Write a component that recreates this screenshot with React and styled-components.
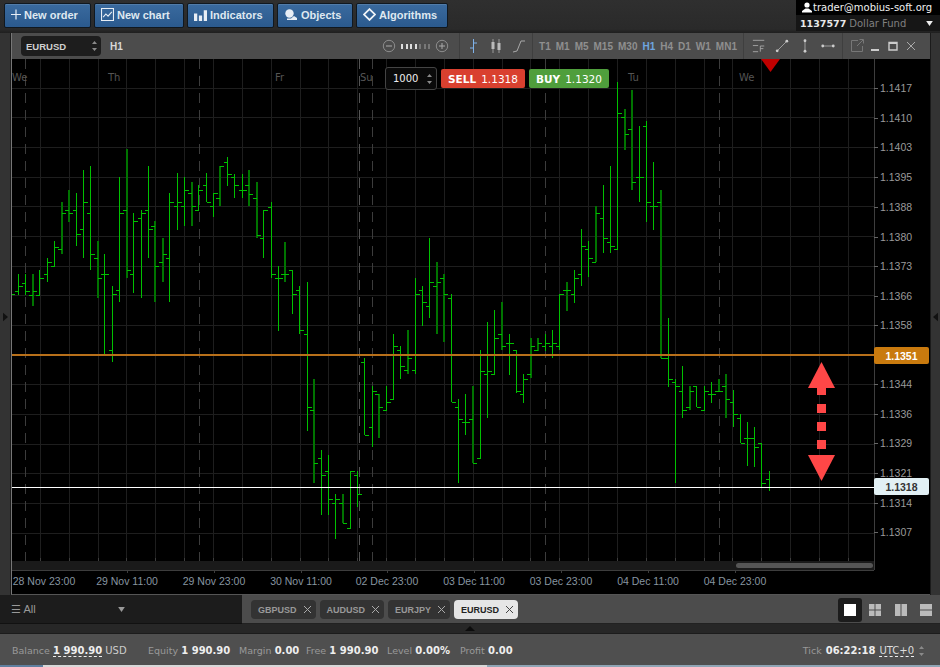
import styled, { createGlobalStyle } from 'styled-components'

const GlobalStyle = createGlobalStyle`
    html, body { margin: 0; padding: 0; background: #222; }
    * { box-sizing: border-box; }
    body { font-family: "DejaVu Sans", "Liberation Sans", sans-serif; }
`

// high, low, open (left tick), close (right tick), dim
const BARS = [
    [274,295,291,286],[274,295,283,291],[274,306,295,291,1],[270,295,295,278],[258,282,274,262],[241,267,266,247],
    [202,254,249,213,1],[190,222,210,213,1],[193,246,210,234],[170,258,229,202],[166,270,213,254],[241,298,258,278,1],
    [254,355,274,274],[286,362,350,294],[177,302,290,213],[149,278,210,270,1],[213,293,274,221],[210,298,218,213],
    [166,258,210,229],[221,302,226,266,1],[238,282,262,254,1],[193,302,258,202],[173,230,206,202],[177,226,206,190],
    [182,226,193,206,1],[185,210,210,190],[173,202,185,202],[193,217,206,193],[166,206,198,166,1],[157,186,162,174],
    [174,198,177,185],[174,198,190,190],[170,206,185,194,1],[182,238,198,235,1],[210,258,238,210],[202,278,207,274],
    [266,331,278,278],[242,282,274,274,1],[270,314,270,294],[286,334,290,330],[282,431,334,407],[379,483,410,463,1],
    [450,515,458,475],[455,515,471,499],[494,539,503,499],[494,523,503,523,1],[471,528,528,471],[471,507,475,494],
    [358,435,362,435],[386,447,427,391],[394,438,394,407,1],[386,411,410,402],[334,399,399,346],[346,379,350,366],
    [330,374,370,358,1],[278,374,370,294],[286,326,290,302],[238,318,306,282],[262,334,286,282,1],[274,342,278,294,1],
    [294,402,298,402],[399,483,407,419],[394,435,422,422],[386,463,419,463,1],[350,458,458,371],[322,418,374,371],
    [310,374,374,338],[302,350,334,346,1],[334,375,343,343],[350,393,350,391],[374,403,394,379],[338,378,374,346,1],
    [338,351,350,343,1],[334,351,346,343],[330,358,346,343],[294,350,346,294],[282,311,290,290,1],[270,303,294,278],
    [229,286,274,246],[241,277,249,258],[206,262,262,213,1],[185,253,218,238],[166,253,242,246],[82,250,249,113],
    [109,150,117,134,1],[90,190,129,182,1],[126,202,177,177],[121,222,126,202],[162,230,206,206],[190,358,202,358,1],
    [318,387,358,379],[379,483,382,386],[366,418,391,410],[386,410,407,391,1],[386,407,386,407],[386,411,410,391],
    [382,403,394,394],[379,391,391,391,1],[374,418,386,399,1],[390,427,402,414],[414,443,418,443],[422,466,438,438],
    [427,467,438,447],[443,487,443,483],[471,491,479,487],
]

const PRICES = [
    ['1.1417', 88], ['1.1410', 118], ['1.1403', 147], ['1.1395', 177], ['1.1388', 207], ['1.1380', 237],
    ['1.1373', 266], ['1.1366', 296], ['1.1358', 325], ['1.1344', 384], ['1.1336', 414], ['1.1329', 443],
    ['1.1321', 473], ['1.1314', 503], ['1.1307', 532],
]

const TIMES = [
    ['28 Nov 23:00', 44], ['29 Nov 11:00', 127], ['29 Nov 23:00', 214], ['30 Nov 11:00', 301], ['02 Dec 23:00', 387],
    ['03 Dec 11:00', 474], ['03 Dec 23:00', 561], ['04 Dec 11:00', 648], ['04 Dec 23:00', 735],
]

const DAYS = [['We', 12], ['Th', 108], ['Fr', 275], ['Su', 360], ['Tu', 628], ['We', 739]]
const FRAMES = ['T1', 'M1', 'M5', 'M15', 'M30', 'H1', 'H4', 'D1', 'W1', 'MN1']
const TABS = ['GBPUSD', 'AUDUSD', 'EURJPY', 'EURUSD']

const px = v => Math.floor(v) + 0.5

function PriceChart() {
    const vGrid = []
    for (let x = 40.3; x < 874; x += 28.86) vGrid.push(px(x))
    const hGrid = []
    for (let y = 88; y < 562; y += 29.67) hGrid.push(px(y))

    return (
        <PlotSvg viewBox="12 59 914 535">
            <g shapeRendering="crispEdges">
                {vGrid.map(x => <line key={x} x1={x} x2={x} y1={59} y2={570} stroke="#1e1e1e" />)}
                {hGrid.map(y => <line key={y} x1={12} x2={874} y1={y} y2={y} stroke="#1e1e1e" />)}
                {[25, 199, 359, 372, 545, 719].map(x => (
                    <line key={x} x1={x + 0.5} x2={x + 0.5} y1={59} y2={561} stroke={x === 359 ? '#555' : '#3c3c3c'} strokeDasharray="10 7" />
                ))}
                <line x1={12} x2={15} y1={294.5} y2={294.5} stroke="#00c000" />
                {BARS.map((b, i) => {
                    const raw = 18.3 + 7.22 * i
                    const x = b[4] ? Math.round(raw) : px(raw)
                    return (
                        <g key={i} stroke="#00c000">
                            <line x1={x} x2={x} y1={b[0]} y2={b[1]} stroke={b[4] ? '#007400' : '#00c000'} strokeWidth={b[4] ? 2 : 1} />
                            <line x1={x - 4} x2={x} y1={px(b[2])} y2={px(b[2])} />
                            <line x1={x} x2={x + 4} y1={px(b[3])} y2={px(b[3])} />
                        </g>
                    )
                })}
                <line x1={12} x2={874} y1={355} y2={355} stroke="#b8701a" strokeWidth="2" />
                <line x1={12} x2={874} y1={487.5} y2={487.5} stroke="#fff" />

                <rect x={12} y={561} width={862} height={9} fill="#1a1a1a" />
                <line x1={874.5} x2={874.5} y1={59} y2={570} stroke="#3d3d3d" />
                <line x1={12} x2={874} y1={570.5} y2={570.5} stroke="#3d3d3d" />
                {vGrid.map(x => <line key={x} x1={x} x2={x} y1={558} y2={561} stroke="#3d3d3d" />)}
                {TIMES.slice(1).map(([, x]) => <line key={x} x1={x + 0.5} x2={x + 0.5} y1={570} y2={573} stroke="#3d3d3d" />)}
                {PRICES.map(([, y]) => <line key={y} x1={874} x2={878} y1={y + 0.5} y2={y + 0.5} stroke="#666" />)}
            </g>

            {DAYS.map(([d, x]) => <DayText key={x} x={x} y={81}>{d}</DayText>)}
            {PRICES.map(([p, y]) => <PriceText key={y} x={880} y={y + 4}>{p}</PriceText>)}
            {TIMES.map(([t, x]) => <TimeText key={x} x={x} y={585}>{t}</TimeText>)}

            <polygon points="761,59 780,59 770.5,72" fill="#c00000" />
            <g fill="#ff4747">
                <polygon points="821.5,362 835,388 808,388" />
                <rect x={817} y={388} width={9} height={7} />
                <rect x={817} y={404} width={9} height={9} />
                <rect x={817} y={422} width={9} height={9} />
                <rect x={817} y={440} width={9} height={9} />
                <polygon points="808,455 835,455 821.5,481" />
            </g>
        </PlotSvg>
    )
}

function SpinArrows() {
    return (
        <SpinSvg viewBox="0 0 7 12">
            <path d="M3.5 1 L6 4 L1 4Z M3.5 11 L6 8 L1 8Z" fill="#8a8a8a" />
        </SpinSvg>
    )
}

export default function App() {
    return (
        <Page>
            <GlobalStyle />
            <TopBar>
                <TopButton $w={87}>
                    <BtnIcon $w={10} viewBox="0 0 10 10"><path d="M5 0V10M0 5H10" stroke="#e8eef5" strokeWidth="1.2" fill="none" /></BtnIcon>
                    New order
                </TopButton>
                <TopButton $w={90}>
                    <BtnIcon viewBox="0 0 12 12"><path d="M.5.5H11.5V11.5H.5Z M2 8.5L4.5 5.5L6.5 7.5L10 3.5" stroke="#e8eef5" fill="none" /></BtnIcon>
                    New chart
                </TopButton>
                <TopButton $w={87}>
                    <BtnIcon viewBox="0 0 12 12"><path d="M0 5H3V12H0Z M4.5 7H7.5V12H4.5Z M9 2H12V12H9Z" fill="#e8eef5" /></BtnIcon>
                    Indicators
                </TopButton>
                <TopButton $w={76}>
                    <BtnIcon $w={14} viewBox="0 0 14 12"><circle cx="5.5" cy="5" r="4.2" fill="#e8eef5" /><path d="M3 11.5H13V9.5L10 7.5L7 10H3Z" fill="#e8eef5" /></BtnIcon>
                    Objects
                </TopButton>
                <TopButton $w={92}>
                    <BtnIcon viewBox="0 0 12 12"><path d="M6 1L11 6L6 11L1 6Z" stroke="#f0f4f8" strokeWidth="1.6" fill="none" /></BtnIcon>
                    Algorithms
                </TopButton>
                <Account>
                    <AccountUser>
                        <svg width="10" height="11" viewBox="0 0 10 11"><circle cx="5" cy="3" r="2.6" fill="#fff" /><path d="M0 10.5H10V9L6.5 6.5H3.5L0 9Z" fill="#fff" /></svg>
                        trader@mobius-soft.org
                    </AccountUser>
                    <AccountFund>
                        <b>1137577</b><span>Dollar Fund</span>
                        <FundArrow viewBox="0 0 8 6"><path d="M0 0H8L4 6Z" fill="#eee" /></FundArrow>
                    </AccountFund>
                </Account>
            </TopBar>

            <Workspace>
                <Gutter>
                    <GutterArrow viewBox="0 0 6 10"><path d="M0 0L6 5L0 10Z" fill="#111" /></GutterArrow>
                </Gutter>
                <ChartWindow>
                    <ChartHeader>
                        <SymbolSelect>EURUSD<SpinArrows /></SymbolSelect>
                        <PeriodLabel>H1</PeriodLabel>
                        <ZoomGroup>
                            <HeadIcon viewBox="0 0 14 14"><circle cx="7" cy="7" r="5.7" fill="none" stroke="#8c8c8c" /><path d="M4 7H10" stroke="#aaa" /></HeadIcon>
                            <ZoomDots>
                                {[1, 1, 1, 1, 0, 0, 0].map((on, i) => <ZoomDot key={i} $on={on} />)}
                            </ZoomDots>
                            <HeadIcon viewBox="0 0 14 14"><circle cx="7" cy="7" r="5.7" fill="none" stroke="#8c8c8c" /><path d="M4 7H10M7 4V10" stroke="#aaa" /></HeadIcon>
                        </ZoomGroup>
                        <IconGroup $w={74} $gap={9} $ml={10}>
                            <HeadIcon viewBox="0 0 14 16"><path d="M7.5 1V15M4 10H7.5M7.5 5H11" stroke="#7fb2ea" fill="none" /></HeadIcon>
                            <HeadIcon viewBox="0 0 14 16"><path d="M4 1V15M10 1V15" stroke="#999" /><path d="M2.5 4H5.5V11H2.5Z M8.5 5H11.5V12H8.5Z" fill="#bbb" /></HeadIcon>
                            <HeadIcon viewBox="0 0 14 16"><path d="M1 14L5 13L9 3H13" stroke="#a8a8a8" fill="none" /></HeadIcon>
                        </IconGroup>
                        <FrameGroup>
                            {FRAMES.map(f => <FrameItem key={f} $active={f === 'H1'}>{f}</FrameItem>)}
                        </FrameGroup>
                        <IconGroup $w={100} $gap={9}>
                            <HeadIcon viewBox="0 0 16 16"><path d="M1 1.5H14M1 7.5H7M1 14.5H7" stroke="#aaa" fill="none" /><path d="M9.5 14.5V8H14M9.5 11H13" stroke="#aaa" fill="none" /></HeadIcon>
                            <HeadIcon viewBox="0 0 16 16"><path d="M2.5 13.5L13.5 2.5" stroke="#aaa" /><circle cx="2.5" cy="13.5" r="1.6" fill="#ccc" /><circle cx="13.5" cy="2.5" r="1.6" fill="#ccc" /></HeadIcon>
                            <HeadIcon viewBox="0 0 16 16"><path d="M8 2V14" stroke="#aaa" /><circle cx="8" cy="2" r="1.6" fill="#ccc" /><circle cx="8" cy="14" r="1.6" fill="#ccc" /></HeadIcon>
                            <HeadIcon viewBox="0 0 16 16"><path d="M2 8H14" stroke="#aaa" /><circle cx="2" cy="8" r="1.6" fill="#ccc" /><circle cx="14" cy="8" r="1.6" fill="#ccc" /></HeadIcon>
                        </IconGroup>
                        <WindowGroup>
                            <HeadIcon viewBox="0 0 14 14"><path d="M8 1.5H1.5V12.5H12.5V7M7 7L13 1M9.5 .5H13.5V4.5" stroke="#777" fill="none" /></HeadIcon>
                            <HeadIcon viewBox="0 0 14 14"><path d="M3 11H11" stroke="#ccc" strokeWidth="2" /></HeadIcon>
                            <HeadIcon viewBox="0 0 14 14"><path d="M3 3.5H11V11H3Z" stroke="#ccc" strokeWidth="1.4" fill="none" /><path d="M3 4H11" stroke="#ccc" strokeWidth="2" /></HeadIcon>
                            <HeadIcon viewBox="0 0 14 14"><path d="M3 3L11 11M11 3L3 11" stroke="#aaa" fill="none" /></HeadIcon>
                        </WindowGroup>
                    </ChartHeader>
                    <ChartBody>
                        <PriceChart />
                        <OrderPanel>
                            <QtyBox>1000<SpinArrows /></QtyBox>
                            <TradeButton $bg="#d9402f" $w={84}><b>SELL</b> 1.1318</TradeButton>
                            <TradeButton $bg="#4f9e3c" $w={80}><b>BUY</b> 1.1320</TradeButton>
                        </OrderPanel>
                        <PriceTag $top={288} $bg="#c97a0e" $color="#fff">1.1351</PriceTag>
                        <PriceTag $top={419} $bg="#e2f0f4" $color="#333">1.1318</PriceTag>
                        <ScrollHandle />
                    </ChartBody>
                </ChartWindow>
                <Gutter $right>
                    <GutterArrow viewBox="0 0 6 10"><path d="M6 0L0 5L6 10Z" fill="#111" /></GutterArrow>
                </Gutter>
            </Workspace>

            <TabsBar>
                <ListPart>
                    <ListName>☰ All</ListName>
                    <ListArrow viewBox="0 0 8 6"><path d="M0 0H8L4 6Z" fill="#999" /></ListArrow>
                </ListPart>
                <TabsPart>
                    {TABS.map(t => (
                        <Tab key={t} $active={t === 'EURUSD'}>
                            {t}
                            <svg width="9" height="9" viewBox="0 0 9 9"><path d="M1 1L8 8M8 1L1 8" stroke={t === 'EURUSD' ? '#444' : '#aaa'} fill="none" /></svg>
                        </Tab>
                    ))}
                    <Layouts>
                        <LayoutCell $active>
                            <svg width="12" height="12" viewBox="0 0 12 12"><rect width="12" height="12" fill="#fff" /></svg>
                        </LayoutCell>
                        <LayoutCell>
                            <svg width="12" height="12" viewBox="0 0 12 12"><path d="M0 0H5.5V5.5H0Z M6.5 0H12V5.5H6.5Z M0 6.5H5.5V12H0Z M6.5 6.5H12V12H6.5Z" fill="#bbb" /></svg>
                        </LayoutCell>
                        <LayoutCell>
                            <svg width="12" height="12" viewBox="0 0 12 12"><path d="M0 0H5.5V12H0Z M6.5 0H12V12H6.5Z" fill="#bbb" /></svg>
                        </LayoutCell>
                        <LayoutCell>
                            <svg width="12" height="12" viewBox="0 0 12 12"><path d="M0 0H12V5.5H0Z M0 6.5H12V12H0Z" fill="#bbb" /></svg>
                        </LayoutCell>
                    </Layouts>
                </TabsPart>
            </TabsBar>

            <Divider />

            <StatusBar>
                <Stat $w={136}><span>Balance</span> <Dotted>1 990.90</Dotted> USD</Stat>
                <Stat $w={91}><span>Equity</span> <b>1 990.90</b></Stat>
                <Stat $w={67}><span>Margin</span> <b>0.00</b></Stat>
                <Stat $w={81}><span>Free</span> <b>1 990.90</b></Stat>
                <Stat $w={73}><span>Level</span> <b>0.00%</b></Stat>
                <Stat><span>Profit</span> <b>0.00</b></Stat>
                <TickInfo>
                    <span>Tick</span> <b>06:22:18</b> <UtcDotted>UTC+0</UtcDotted>
                    <SpinArrows />
                </TickInfo>
            </StatusBar>
            <FootStrip />
        </Page>
    )
}

const Page = styled.div`
    width: 940px;
    height: 667px;
    overflow: hidden;
    display: flex;
    flex-direction: column;
    background: #222;
    color: #ddd;
`

const TopBar = styled.div`
    height: 33px;
    flex: none;
    display: flex;
    align-items: flex-start;
    gap: 3px;
    padding: 3px 0 0 4px;
    background: linear-gradient(#2f2f2f, #2a2a2a 88%, #1f1f1f);
`

const TopButton = styled.div`
    width: ${props => props.$w}px;
    height: 25px;
    display: flex;
    align-items: center;
    gap: 3px;
    padding: 0 0 2px 6px;
    border: 1px solid #101820;
    border-radius: 2px;
    background: linear-gradient(#3a6a9e, #2b5a8e);
    box-shadow: inset 0 1px 0 rgba(255, 255, 255, 0.12);
    color: #dfe8f0;
    font-family: "Liberation Sans", sans-serif;
    font-size: 11px;
    font-weight: 700;
    white-space: nowrap;
`

const BtnIcon = styled.svg`
    width: ${props => props.$w || 13}px;
    height: 13px;
    flex: none;
`

const Account = styled.div`
    margin: -3px 0 0 auto;
    width: 144px;
    height: 31px;
    background: #161616;
    font-size: 10px;
`

const AccountUser = styled.div`
    height: 15px;
    display: flex;
    align-items: center;
    gap: 1px;
    padding-left: 6px;
    background: #000;
    color: #f0f0f0;
`

const AccountFund = styled.div`
    height: 16px;
    display: flex;
    align-items: center;
    gap: 3px;
    padding-left: 4px;
    color: #808080;
    b { color: #e8e8e8; font-size: 9.5px; }
`

const FundArrow = styled.svg`
    width: 7px;
    height: 5px;
    margin-left: auto;
    margin-right: 7px;
    flex: none;
`

const Workspace = styled.div`
    height: 562px;
    flex: none;
    display: flex;
`

const Gutter = styled.div`
    width: ${props => (props.$right ? 10 : 11)}px;
    flex: none;
    display: flex;
    align-items: center;
    justify-content: center;
    padding-top: 6px;
    background: #333;
    border-${props => (props.$right ? 'left' : 'right')}: 1px solid #1b1b1b;
`

const GutterArrow = styled.svg`
    width: 5px;
    height: 10px;
`

const ChartWindow = styled.div`
    flex: 1;
    min-width: 0;
    display: flex;
    flex-direction: column;
    border-left: 1px solid #777;
    border-bottom: 1px solid #555;
    background: #000;
`

const ChartHeader = styled.div`
    height: 26px;
    flex: none;
    display: flex;
    align-items: center;
    background: #4c4c4c;
`

const SymbolSelect = styled.div`
    width: 80px;
    height: 20px;
    margin-left: 9px;
    flex: none;
    display: flex;
    align-items: center;
    justify-content: space-between;
    padding: 0 3px 0 5px;
    border-radius: 4px;
    background: #1d1d1d;
    color: #d0d0d0;
    font-family: "Liberation Sans", sans-serif;
    font-size: 9.5px;
    font-weight: 700;
`

const SpinSvg = styled.svg`
    width: 7px;
    height: 12px;
    flex: none;
`

const PeriodLabel = styled.div`
    margin-left: 9px;
    width: 272px;
    flex: none;
    color: #d8d8d8;
    font-family: "Liberation Sans", sans-serif;
    font-size: 10px;
    font-weight: 700;
`

const ZoomGroup = styled.div`
    width: 67px;
    flex: none;
    display: flex;
    align-items: center;
    gap: 4px;
`

const HeadIcon = styled.svg`
    width: 14px;
    height: 16px;
    flex: none;
`

const ZoomDots = styled.div`
    flex: 1;
    display: flex;
    justify-content: space-between;
    padding: 0 1px;
`

const ZoomDot = styled.i`
    width: 2px;
    height: 5px;
    background: ${props => (props.$on ? '#ddd' : '#777')};
`

const IconGroup = styled.div`
    width: ${props => props.$w}px;
    height: 26px;
    margin-left: ${props => props.$ml || 0}px;
    flex: none;
    display: flex;
    align-items: center;
    justify-content: center;
    gap: ${props => props.$gap}px;
    border-left: 1px solid #3f3f3f;
    border-right: 1px solid #3f3f3f;
`

const FrameGroup = styled.div`
    width: 210px;
    flex: none;
    display: flex;
    justify-content: center;
    gap: 5px;
    font-family: "Liberation Sans", sans-serif;
    font-size: 10px;
    font-weight: 700;
`

const FrameItem = styled.span`
    color: ${props => (props.$active ? '#6fa6e0' : '#8f8f8f')};
`

const WindowGroup = styled.div`
    height: 26px;
    flex: 1;
    display: flex;
    align-items: center;
    gap: 4px;
    padding-left: 7px;
`

const ChartBody = styled.div`
    position: relative;
    flex: 1;
    min-height: 0;
    background: #000;
`

const PlotSvg = styled.svg`
    display: block;
    width: 914px;
    height: 535px;
`

const DayText = styled.text`
    fill: #555;
    font-size: 10px;
`

const PriceText = styled.text`
    fill: #9a9a9a;
    font-family: "Liberation Sans", sans-serif;
    font-size: 10.5px;
`

const TimeText = styled.text`
    fill: #8795a0;
    font-family: "Liberation Sans", sans-serif;
    font-size: 10.5px;
    text-anchor: middle;
`

const OrderPanel = styled.div`
    position: absolute;
    top: 8px;
    left: 373px;
    display: flex;
    align-items: center;
    gap: 4px;
`

const QtyBox = styled.div`
    width: 52px;
    height: 23px;
    display: flex;
    align-items: center;
    justify-content: space-between;
    padding: 0 3px 0 7px;
    border: 1px solid #444;
    border-radius: 3px;
    background: #0a0a0a;
    color: #eee;
    font-size: 10px;
`

const TradeButton = styled.div`
    width: ${props => props.$w}px;
    height: 19px;
    display: flex;
    align-items: center;
    justify-content: center;
    gap: 5px;
    border-radius: 2px;
    background: ${props => props.$bg};
    color: #fff;
    font-size: 10.5px;
`

const PriceTag = styled.div`
    position: absolute;
    top: ${props => props.$top}px;
    left: 862px;
    width: 55px;
    height: 17px;
    display: flex;
    align-items: center;
    justify-content: center;
    border-radius: 2px;
    background: ${props => props.$bg};
    color: ${props => props.$color};
    font-family: "Liberation Sans", sans-serif;
    font-size: 10.5px;
    font-weight: 700;
`

const ScrollHandle = styled.div`
    position: absolute;
    top: 504px;
    left: 724px;
    width: 137px;
    height: 5px;
    border-radius: 3px;
    background: #555;
`

const TabsBar = styled.div`
    height: 29px;
    flex: none;
    display: flex;
`

const ListPart = styled.div`
    width: 242px;
    flex: none;
    display: flex;
    align-items: center;
    padding-left: 11px;
    background: #1c1c1c;
    border-bottom: 1px solid #111;
`

const ListName = styled.div`
    width: 107px;
    color: #999;
    font-family: "Liberation Sans", sans-serif;
    font-size: 11px;
`

const ListArrow = styled.svg`
    width: 7px;
    height: 5px;
`

const TabsPart = styled.div`
    flex: 1;
    display: flex;
    align-items: center;
    gap: 4px;
    padding: 1px 2px 0 9px;
    background: #4c4c4c;
    border-bottom: 1px solid #222;
`

const Tab = styled.div`
    height: 19px;
    display: flex;
    align-items: center;
    gap: 6px;
    padding: 0 4px 0 7px;
    border-radius: 4px;
    background: ${props => (props.$active ? '#e6e6e6' : '#333')};
    color: ${props => (props.$active ? '#222' : '#999')};
    font-family: "Liberation Sans", sans-serif;
    font-size: 9px;
    font-weight: 700;
`

const Layouts = styled.div`
    margin-left: auto;
    display: flex;
    align-items: center;
    gap: 1.5px;
`

const LayoutCell = styled.div`
    width: 24px;
    height: 24px;
    display: flex;
    align-items: center;
    justify-content: center;
    border-radius: 3px;
    background: ${props => (props.$active ? '#1c1c1c' : 'transparent')};
`

const Divider = styled.div`
    position: relative;
    height: 10px;
    flex: none;
    background: #272727;
    border-bottom: 1px solid #1c1c1c;

    &::after {
        content: '';
        position: absolute;
        top: 2px;
        left: 465px;
        border-bottom: 5px solid #0c0c0c;
        border-left: 5px solid transparent;
        border-right: 5px solid transparent;
    }
`

const StatusBar = styled.div`
    height: 31px;
    flex: none;
    display: flex;
    align-items: center;
    padding: 2px 0 0 12px;
    background: #4f4f4f;
    color: #ccc;
    font-size: 10px;
    white-space: pre;
    b { color: #eee; }
`

const Stat = styled.div`
    width: ${props => (props.$w ? `${props.$w}px` : 'auto')};
    flex: none;
    span { color: #999; font-size: 9.5px; }
`

const Dotted = styled.b`
    border-bottom: 1px dashed #eee;
`

const UtcDotted = styled.span`
    color: #ddd !important;
    font-size: 10px !important;
    border-bottom: 1px dashed #eee;
`

const TickInfo = styled.div`
    margin-left: auto;
    margin-right: 15px;
    display: flex;
    align-items: center;
    gap: 4px;
    span { color: #999; font-size: 9.5px; }
`

const FootStrip = styled.div`
    height: 2px;
    flex: none;
    background: linear-gradient(to right, #5f7f9f 0 43px, #d8d8d8 43px 487px, #8fa5b5 487px);
`
